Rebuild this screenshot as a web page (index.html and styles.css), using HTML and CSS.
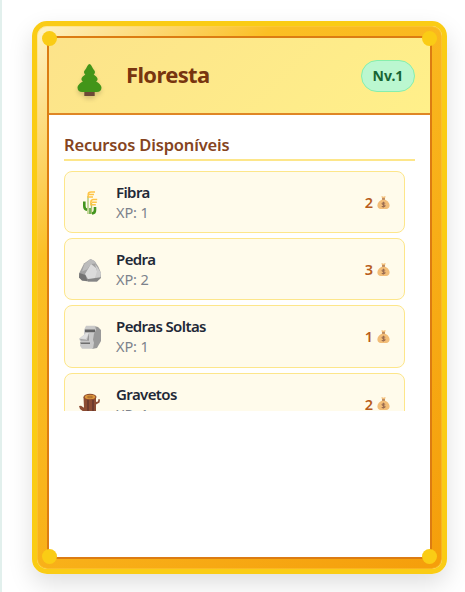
FILE: index.html
```html
<!DOCTYPE html>
<html lang="pt">
<head>
<meta charset="utf-8">
<title>Floresta</title>
<link rel="stylesheet" href="styles.css">
</head>
<body>
<svg class="defs" aria-hidden="true">
  <symbol id="bag" viewBox="0 0 14 15">
    <path fill="#f2bd78" d="M4.800 .5 7 1.200 9.200 .5 8.400 4.200C11 5.200 13.600 7.800 13.600 10.500c0 2.800-1.800 4-3.500 4H3.900c-1.700 0-3.500-1.200-3.500-4C.4 7.800 3 5.200 5.600 4.200z"/>
    <path fill="#98694f" d="M5.500 3.100h3v1.200h-3z"/>
    <path fill="none" stroke="#9b6c50" stroke-width="1.100" d="M8.700 8.500C8 7.400 5.400 7.500 5.400 8.900c.1 1.300 3.300.8 3.300 2.100 0 1.400-2.700 1.500-3.500.4M7 6.800v6"/>
  </symbol>
</svg>
<main class="card">
  <i class="dot tl"></i><i class="dot tr"></i><i class="dot bl"></i><i class="dot br"></i>
  <section class="panel">
    <header class="header">
      <svg class="tree" viewBox="0 0 24 32"><path fill="#6d4937" d="M6.800 26h10.400v6H6.800z"/><path fill="#429519" d="M12 0c1.500 0 2.200 2.300 3.300 4.300 1.400 2.300 2.600 3 2.100 4.500-.2.800-.6 1.300-1.200 1.600 1.400 1.100 3.900 2.600 3.900 4.700 0 1.200-.7 2-1.500 2.400 2.300 1.200 5.400 3.500 5.400 6.300 0 2.800-2 4.200-4.600 4.200H4.600C2 28 0 26.600 0 23.800c0-2.800 3.100-5.100 5.400-6.300-.8-.4-1.500-1.200-1.500-2.400 0-2.100 2.500-3.600 3.900-4.700-.6-.3-1-.8-1.200-1.600-.5-1.500.7-2.200 2.100-4.500C9.800 2.300 10.500 0 12 0z"/></svg>
      <h1 class="title">Floresta</h1>
      <span class="level">Nv.1</span>
    </header>
    <div class="content">
      <h2 class="subtitle">Recursos Disponíveis</h2>
      <div class="list">
        <article class="item">
          <svg class="icon" viewBox="0 0 24 24"><g fill="none"><path stroke="#a9c46d" stroke-width="1.300" d="M10 23V5M13.500 23V12"/><path stroke="#ffc548" stroke-width="1.500" d="M10.200 7V3.500Q10.200 1 13 1h4M11 3.500h5M11 6h4M12.800 14.500v-3Q12.800 8.500 15.500 8.500h3.700M13.800 11.200h5M13.800 13.800h4"/><path stroke="#43951f" stroke-width="2.600" d="M6.300 10.500V15q0 3.500 2.800 3.800M17 16v3q0 3.200-3 3.500"/><path stroke="#43951f" stroke-width="1.400" d="M12 17v6"/></g></svg>
          <div class="info"><h3 class="name">Fibra</h3><p class="xp">XP: 1</p></div>
          <div class="price">2<svg class="bag"><use href="#bag"/></svg></div>
        </article>
        <article class="item">
          <svg class="icon" viewBox="0 0 24 24"><path fill="#a1a1a1" d="M12.500 1 6 5.500 3 11.500l-2 4v4l3 3 6 1h9l4-3.500v-5L20.500 9 17 3.500z"/><path fill="#737373" d="m1.500 15 6 2 2 6-5.500-.6-3-3z"/><path fill="#858585" d="m9 21 14-1.500-4 4h-9z"/><path fill="#bcbcbc" d="m12.500 1-6 5L4 13.500l5-2 4-5.500 5-.5-2-3z"/><path fill="#dbdbdb" d="m13 6 5 4 2 6-3 4-7 1-3-5 3-5z"/><path fill="#cdcdcd" d="m17 6 3 4 3 5-.5 4-5.500 1 2-7z"/></svg>
          <div class="info"><h3 class="name">Pedra</h3><p class="xp">XP: 2</p></div>
          <div class="price">3<svg class="bag"><use href="#bag"/></svg></div>
        </article>
        <article class="item">
          <svg class="icon" viewBox="0 0 24 24"><path fill="#999" d="m16 1 4 1 3 3v11l-4 7-5 1 1-15z"/><path fill="#c9c9c9" d="M8 .8h9l1 4-2 4-1 6 1 3-1 6H4l-2-3 .5-4-1.500-3 5-4V5z"/><path fill="#e0e0e0" d="m8 8-6 5.500 6 .5 3-6z"/><path fill="#626262" d="M7 4.500h10v2.700H7z"/><path fill="#6f6f6f" d="M2 17.500h10V19H3z"/><path fill="#999" d="m11 8-2 7-7-1 1 1.500 8 .2z"/></svg>
          <div class="info"><h3 class="name">Pedras Soltas</h3><p class="xp">XP: 1</p></div>
          <div class="price">1<svg class="bag"><use href="#bag"/></svg></div>
        </article>
        <article class="item">
          <svg class="icon" viewBox="0 0 24 24"><path fill="#8c4c33" d="M5.500 4H18v5l2-.5.500-2.500 1.500.5-.5 3-3.500 2v11.500H5l1-4-4-3-1-3 2-.3 3 2z"/><path fill="#6f3b2d" d="M9 7h2v16H9zM14 7h2v16h-2z"/><ellipse cx="12" cy="4" rx="6.500" ry="3.200" fill="#8b4a2e"/><ellipse cx="12" cy="4" rx="5.300" ry="2.200" fill="#dc963c"/><ellipse cx="12" cy="4" rx="2.600" ry=".8" fill="none" stroke="#935929" stroke-width=".7"/></svg>
          <div class="info"><h3 class="name">Gravetos</h3><p class="xp">XP: 1</p></div>
          <div class="price">2<svg class="bag"><use href="#bag"/></svg></div>
        </article>
      </div>
    </div>
  </section>
</main>
</body>
</html>
```
FILE: styles.css
```css
* { box-sizing: border-box; }
body {
  margin: 0;
  height: 592px;
  overflow: hidden;
  border-left: 2px solid #e2f0ed;
  padding: 21px 18px 18px 30px;
  background: #fff;
  font-family: "Noto Sans", "Open Sans", sans-serif;
}
h1, h2, h3, p { margin: 0; }
.defs { position: absolute; width: 0; height: 0; }
.card {
  position: relative;
  width: 415px;
  height: 553px;
  padding: 10px;
  border: 5px solid #facc15;
  border-radius: 15px;
  background: linear-gradient(135deg, #fef3c7 0%, #fbbf24 25%, #f59e0b 100%) padding-box;
  box-shadow: 0 10px 24px rgba(0, 0, 0, .13), inset 0 0 0 1px rgba(255, 215, 80, .35);
}
.dot { position: absolute; z-index: 1; width: 15px; height: 15px; border-radius: 50%; background: #facc15; }
.tl { left: 5px; top: 5px; }
.tr { right: 5px; top: 5px; }
.bl { left: 5px; bottom: 5px; }
.br { right: 5px; bottom: 5px; }
.panel { height: 100%; border: 2px solid #dc7c12; background: #fff; }
.header {
  display: flex;
  align-items: center;
  height: 77px;
  padding: 0 15px 0 28px;
  border-bottom: 2px solid #df8625;
  background: linear-gradient(135deg, #fce38a, #fff08a);
}
.tree { width: 25px; height: 32px; margin-top: 8px; filter: drop-shadow(0 3px 2px rgba(0, 0, 0, .15)); }
.title { margin: -3px 0 0 24px; color: #78350f; font-size: 22px; line-height: 30px; font-weight: 700; letter-spacing: -.65px; }
.level {
  width: 54px;
  height: 32px;
  margin-left: auto;
  border: 1px solid #86efac;
  border-radius: 16px;
  background: #bbf7d0;
  color: #166534;
  font-size: 14px;
  line-height: 30px;
  font-weight: 700;
  text-align: center;
}
.content { padding: 18px 15px 0; }
.subtitle { height: 28px; border-bottom: 2px solid #fde68a; color: #854421; font-size: 16.5px; line-height: 23px; font-weight: 600; letter-spacing: -.18px; }
.list { display: flex; flex-direction: column; gap: 5px; height: 240px; margin-top: 10px; padding-right: 10px; overflow: hidden; }
.item {
  display: flex;
  flex: none;
  align-items: center;
  height: 62.2px;
  padding: 0 14px;
  border: 1px solid #fde68a;
  border-radius: 8px;
  background: #fffbeb;
}
.icon { width: 24px; height: 24px; margin: 2px 0 0 -1px; }
.info { margin: 0 0 0 14px; }
.name { color: #1f2937; font-size: 15px; line-height: 21px; font-weight: 600; letter-spacing: -.6px; }
.xp { color: #7c828b; font-size: 14.5px; line-height: 19px; font-weight: 400; letter-spacing: -.1px; }
.price { display: flex; align-items: center; gap: 4px; margin-left: auto; color: #b85d1b; font-size: 14.5px; font-weight: 600; }
.bag { width: 13px; height: 15px; }
```
